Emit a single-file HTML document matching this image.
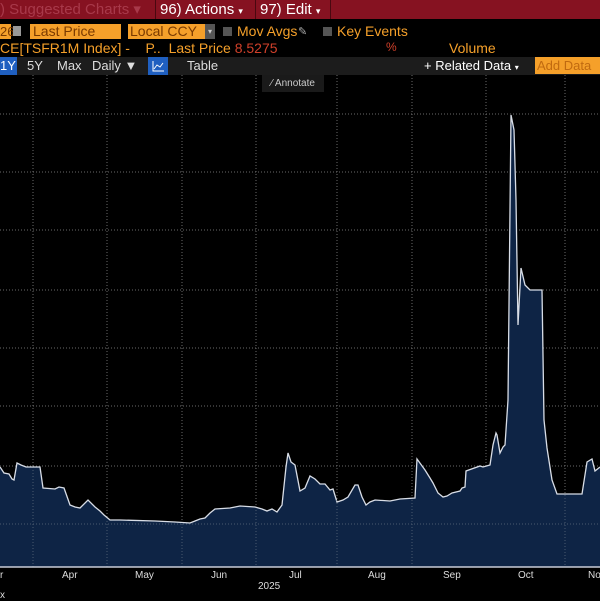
<!DOCTYPE html>
<html><head><style>
body{margin:0;width:600px;height:600px;background:#000;overflow:hidden;position:relative;font-family:"Liberation Sans",sans-serif;}
.a{position:absolute;white-space:nowrap;}
.or{background:#f5a02a;color:#7a3a00;}
</style></head><body>
<div class="a" style="left:0;top:0;width:600px;height:19px;background:#861221;"></div>
<div class="a" style="left:0;top:0;font-size:15px;line-height:19px;color:#a8394a;">) Suggested Charts ▾</div>
<div class="a" style="left:155px;top:0;width:1px;height:19px;background:#4a0810"></div>
<div class="a" style="left:160px;top:0;font-size:15px;line-height:19px;color:#fff;">96) Actions <span style="font-size:9px">▾</span></div>
<div class="a" style="left:255px;top:0;width:1px;height:19px;background:#4a0810"></div>
<div class="a" style="left:260px;top:0;font-size:15px;line-height:19px;color:#fff;">97) Edit <span style="font-size:9px">▾</span></div>
<div class="a" style="left:330px;top:0;width:1px;height:19px;background:#4a0810"></div>

<div class="a or" style="left:0;top:24px;width:11px;height:15px;font-size:13px;line-height:15px;">26</div>
<div class="a" style="left:13px;top:26px;width:8px;height:10px;background:#999;"></div>
<div class="a or" style="left:30px;top:24px;width:88px;height:15px;font-size:14px;line-height:15px;padding-left:3px;">Last Price</div>
<div class="a or" style="left:128px;top:24px;width:75px;height:15px;font-size:14px;line-height:15px;padding-left:2px;">Local CCY</div>
<div class="a" style="left:205px;top:24px;width:10px;height:15px;background:#555;color:#ccc;font-size:8px;line-height:15px;text-align:center">▾</div>
<div class="a" style="left:223px;top:27px;width:9px;height:9px;background:#555;"></div>
<div class="a" style="left:237px;top:23px;font-size:14px;color:#f5a02a;">Mov Avgs</div>
<div class="a" style="left:298px;top:25px;font-size:11px;color:#aaa;">✎</div>
<div class="a" style="left:323px;top:27px;width:9px;height:9px;background:#555;"></div>
<div class="a" style="left:337px;top:23px;font-size:14px;color:#f5a02a;">Key Events</div>

<div class="a" style="left:0;top:40px;font-size:14px;color:#f5a02a;">CE[TSFR1M Index] -&nbsp;&nbsp;&nbsp; P..&nbsp; Last Price <span style="color:#d0402a">8.5275</span></div>
<div class="a" style="left:386px;top:40px;font-size:12px;color:#d0402a;">%</div>
<div class="a" style="left:449px;top:40px;font-size:14px;color:#f5a02a;">Volume</div>

<div class="a" style="left:0;top:57px;width:600px;height:18px;background:#1c1c1c;"></div>
<div class="a" style="left:0;top:57px;width:17px;height:18px;background:#1f5fc0;color:#fff;font-size:13px;line-height:18px;">1Y</div>
<div class="a" style="left:27px;top:57px;color:#ddd;font-size:13px;line-height:18px;">5Y</div>
<div class="a" style="left:57px;top:57px;color:#ddd;font-size:13px;line-height:18px;">Max</div>
<div class="a" style="left:92px;top:57px;color:#ddd;font-size:13px;line-height:18px;">Daily ▼</div>
<div class="a" style="left:148px;top:57px;width:20px;height:18px;background:#1f5fc0;"><svg width="20" height="18"><path d="M5 4v10h11M6 12l3-4 3 2 3-4" stroke="#fff" fill="none" stroke-width="1"/></svg></div>
<div class="a" style="left:187px;top:57px;color:#ddd;font-size:13px;line-height:18px;">Table</div>
<div class="a" style="left:424px;top:57px;color:#fff;font-size:13px;line-height:18px;">+ Related Data <span style="font-size:8px">▾</span></div>
<div class="a or" style="left:535px;top:57px;width:65px;height:17px;font-size:13px;line-height:17px;color:#c06a10;padding-left:2px;">Add Data</div>

<svg class="a" style="left:0;top:75px" width="600" height="525">
<g stroke="#6a6a6a" stroke-dasharray="1,2" stroke-width="1">
<line x1="33" y1="0" x2="33" y2="492"/><line x1="107" y1="0" x2="107" y2="492"/><line x1="182" y1="0" x2="182" y2="492"/><line x1="256" y1="0" x2="256" y2="492"/><line x1="337" y1="0" x2="337" y2="492"/><line x1="412" y1="0" x2="412" y2="492"/><line x1="486" y1="0" x2="486" y2="492"/><line x1="565" y1="0" x2="565" y2="492"/>
<line x1="0" y1="39" x2="600" y2="39"/><line x1="0" y1="97" x2="600" y2="97"/><line x1="0" y1="155" x2="600" y2="155"/><line x1="0" y1="215" x2="600" y2="215"/><line x1="0" y1="273" x2="600" y2="273"/><line x1="0" y1="331" x2="600" y2="331"/><line x1="0" y1="391" x2="600" y2="391"/><line x1="0" y1="449" x2="600" y2="449"/>
</g>
<g transform="translate(0,-75)">
<path d="M0 467L4 473L9 474L12 479L14 480L17 463L21 465L26 467L40 467L43 488L55 489L59 487L64 488L70 505L75 507L80 508L88 500L95 507L100 511L104 515L110 520L120 520L155 521L175 522L190 523L195 521L200 519L205 518L210 513L215 509L230 508L240 506L255 507L262 509L267 511L272 509L277 512L282 505L286 467L288 453L291 462L295 465L300 491L305 488L310 476L315 479L320 484L325 484L330 490L333 489L337 502L343 500L348 497L355 485L358 485L362 497L366 505L370 502L375 500L390 501L400 499L415 498L417 459L425 470L430 478L433 483L438 493L443 497L447 496L452 493L460 491L462 488L465 487L466 471L480 466L483 467L490 465L493 445L496 433L497 435L500 453L503 447L505 445L508 400L511 115L514 130L516 200L518 325L521 268L525 285L530 290L542 290L544 420L547 448L552 480L557 494L582 494L587 462L592 459L595 471L600 467L600 567L0 567Z" fill="#0e2445" stroke="none"/>
<path d="M0 467L4 473L9 474L12 479L14 480L17 463L21 465L26 467L40 467L43 488L55 489L59 487L64 488L70 505L75 507L80 508L88 500L95 507L100 511L104 515L110 520L120 520L155 521L175 522L190 523L195 521L200 519L205 518L210 513L215 509L230 508L240 506L255 507L262 509L267 511L272 509L277 512L282 505L286 467L288 453L291 462L295 465L300 491L305 488L310 476L315 479L320 484L325 484L330 490L333 489L337 502L343 500L348 497L355 485L358 485L362 497L366 505L370 502L375 500L390 501L400 499L415 498L417 459L425 470L430 478L433 483L438 493L443 497L447 496L452 493L460 491L462 488L465 487L466 471L480 466L483 467L490 465L493 445L496 433L497 435L500 453L503 447L505 445L508 400L511 115L514 130L516 200L518 325L521 268L525 285L530 290L542 290L544 420L547 448L552 480L557 494L582 494L587 462L592 459L595 471L600 467" fill="none" stroke="#d8dde6" stroke-width="1.3"/>
</g>
<g stroke="#4a5a70" stroke-dasharray="1,2"><line x1="33" y1="395" x2="33" y2="492"/><line x1="107" y1="446" x2="107" y2="492"/><line x1="182" y1="449" x2="182" y2="492"/><line x1="256" y1="435" x2="256" y2="492"/><line x1="337" y1="425" x2="337" y2="492"/><line x1="412" y1="425" x2="412" y2="492"/><line x1="565" y1="420" x2="565" y2="492"/><line x1="0" y1="449" x2="600" y2="449"/></g>
<line x1="0" y1="492" x2="600" y2="492" stroke="#c8ccd8" stroke-width="1.5"/>
</svg>
<div class="a" style="left:262px;top:75px;width:62px;height:17px;background:#1a1a1a;color:#ccc;font-size:10px;line-height:17px;text-align:center">⁄ Annotate</div>
<div style="position:absolute;top:570px;left:0;width:600px;font-size:10px;color:#ddd;">
<span class="a" style="left:0">r</span><span class="a" style="left:62px">Apr</span><span class="a" style="left:135px">May</span><span class="a" style="left:211px">Jun</span><span class="a" style="left:289px">Jul</span><span class="a" style="left:368px">Aug</span><span class="a" style="left:443px">Sep</span><span class="a" style="left:518px">Oct</span><span class="a" style="left:588px">No</span>
<span class="a" style="left:258px;top:11px">2025</span><span class="a" style="left:0;top:20px">x</span></div>
</body></html>
